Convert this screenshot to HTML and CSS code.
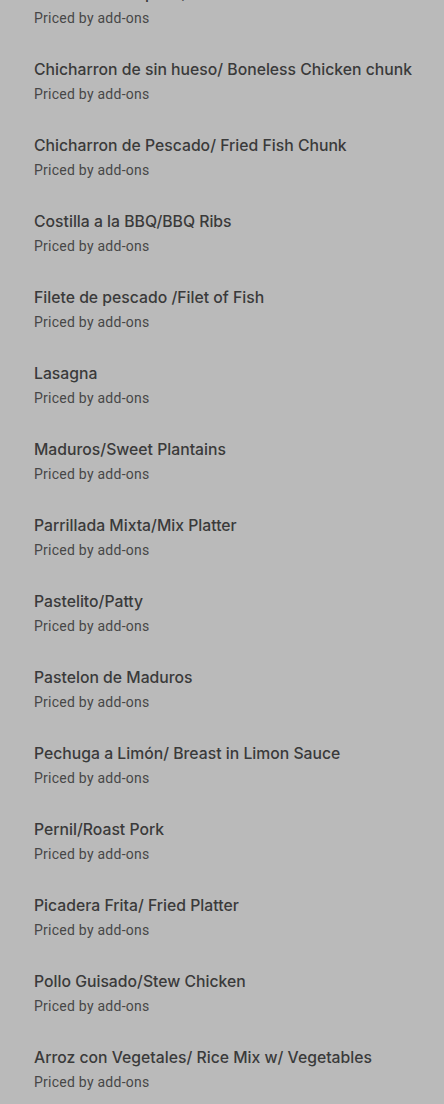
FILE: index.html
```html
<!DOCTYPE html>
<html>
<head>
    <title>Menu</title>
    <link rel="stylesheet" href="styles.css">
</head>
<body>
    <ul class="menu-list">
        <li class="menu-item">
            <h3 class="item-name">Chicharron de pollo/ Fried Chicken</h3>
            <p class="item-price">Priced by add-ons</p>
        </li>
        <li class="menu-item">
            <h3 class="item-name">Chicharron de sin hueso/ Boneless Chicken chunk</h3>
            <p class="item-price">Priced by add-ons</p>
        </li>
        <li class="menu-item">
            <h3 class="item-name">Chicharron de Pescado/ Fried Fish Chunk</h3>
            <p class="item-price">Priced by add-ons</p>
        </li>
        <li class="menu-item">
            <h3 class="item-name">Costilla a la BBQ/BBQ Ribs</h3>
            <p class="item-price">Priced by add-ons</p>
        </li>
        <li class="menu-item">
            <h3 class="item-name">Filete de pescado /Filet of Fish</h3>
            <p class="item-price">Priced by add-ons</p>
        </li>
        <li class="menu-item">
            <h3 class="item-name">Lasagna</h3>
            <p class="item-price">Priced by add-ons</p>
        </li>
        <li class="menu-item">
            <h3 class="item-name">Maduros/Sweet Plantains</h3>
            <p class="item-price">Priced by add-ons</p>
        </li>
        <li class="menu-item">
            <h3 class="item-name">Parrillada Mixta/Mix Platter</h3>
            <p class="item-price">Priced by add-ons</p>
        </li>
        <li class="menu-item">
            <h3 class="item-name">Pastelito/Patty</h3>
            <p class="item-price">Priced by add-ons</p>
        </li>
        <li class="menu-item">
            <h3 class="item-name">Pastelon de Maduros</h3>
            <p class="item-price">Priced by add-ons</p>
        </li>
        <li class="menu-item">
            <h3 class="item-name">Pechuga a Limón/ Breast in Limon Sauce</h3>
            <p class="item-price">Priced by add-ons</p>
        </li>
        <li class="menu-item">
            <h3 class="item-name">Pernil/Roast Pork</h3>
            <p class="item-price">Priced by add-ons</p>
        </li>
        <li class="menu-item">
            <h3 class="item-name">Picadera Frita/ Fried Platter</h3>
            <p class="item-price">Priced by add-ons</p>
        </li>
        <li class="menu-item">
            <h3 class="item-name">Pollo Guisado/Stew Chicken</h3>
            <p class="item-price">Priced by add-ons</p>
        </li>
        <li class="menu-item">
            <h3 class="item-name">Arroz con Vegetales/ Rice Mix w/ Vegetables</h3>
            <p class="item-price">Priced by add-ons</p>
        </li>
    </ul>
</body>
</html>
```

FILE: styles.css
```css
/* Page dimmed behind a sheet */
body {
    margin: 0;
    background-color: #bababa;
    font-family: Inter, "Liberation Sans", sans-serif;
    overflow: hidden;
}

/* Menu list, scrolled a little */
.menu-list {
    list-style: none;
    margin: -34px 0 0 0;
    padding: 0 0 0 34px;
}

.menu-item {
    padding: 16px 0 14px 0;
}

.item-name {
    margin: 0;
    font-size: 15.75px;
    font-weight: 500;
    line-height: 24px;
    color: #3a3a3a;
}

.item-price {
    margin: 2px 0 0 0;
    font-family: Roboto, "Liberation Sans", sans-serif;
    font-size: 14px;
    letter-spacing: 0.25px;
    line-height: 20px;
    color: #474747;
}
```
